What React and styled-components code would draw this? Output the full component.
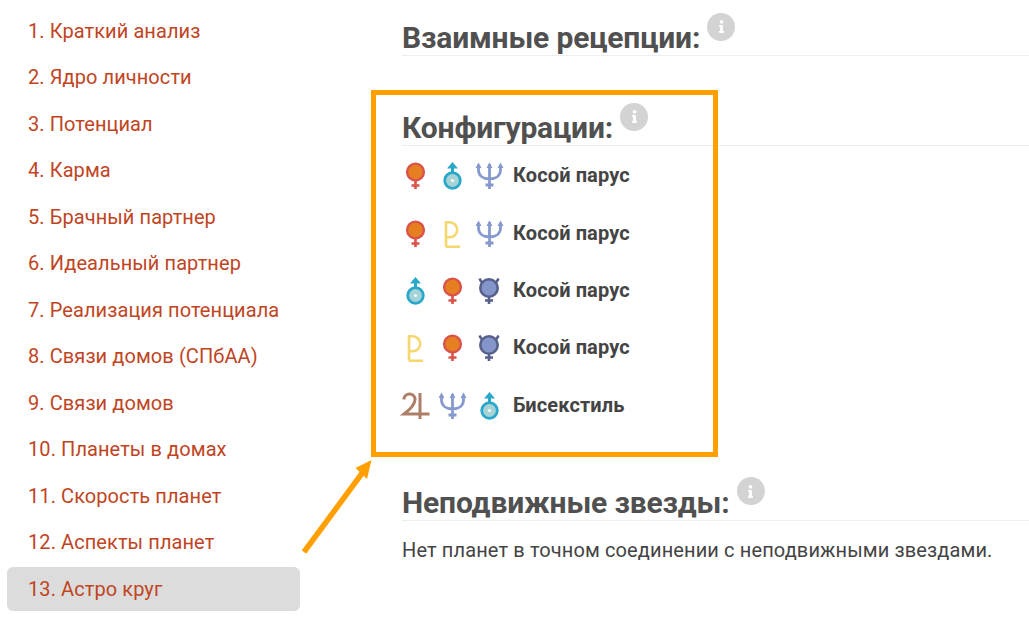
import React from "react";
import styled, { createGlobalStyle } from "styled-components";
import { FaInfo } from "react-icons/fa";

const menu = [
    "1. Краткий анализ",
    "2. Ядро личности",
    "3. Потенциал",
    "4. Карма",
    "5. Брачный партнер",
    "6. Идеальный партнер",
    "7. Реализация потенциала",
    "8. Связи домов (СПбАА)",
    "9. Связи домов",
    "10. Планеты в домах",
    "11. Скорость планет",
    "12. Аспекты планет",
    "13. Астро круг",
];

const Venus = () => (
    <svg width="30" height="30" viewBox="0 0 30 30">
        <path d="M15.500 20v9M11.500 25.500h8" stroke="#d9534a" strokeWidth="2.600" fill="none" />
        <circle cx="15.500" cy="12" r="8.400" fill="#e67e22" stroke="#d9534a" strokeWidth="2.400" />
    </svg>
);
const Uranus = () => (
    <svg width="30" height="30" viewBox="0 0 30 30">
        <path d="M15.500 13V4" stroke="#2aa7c9" strokeWidth="3" fill="none" />
        <path d="M15.500 2L21 8.500H10Z" fill="#2aa7c9" />
        <circle cx="15.500" cy="20.500" r="7.800" fill="#a5d3d6" stroke="#2aa7c9" strokeWidth="2.800" />
        <circle cx="15.500" cy="20.500" r="1.600" fill="#f4fbfb" />
    </svg>
);
const Neptune = () => (
    <svg width="30" height="30" viewBox="0 0 30 30">
        <path
            d="M15.500 4v25M11.500 25h8M4.500 5v5c0 6 5 9 11 9s11-3 11-9V5"
            stroke="#8699cf"
            strokeWidth="2.800"
            fill="none"
        />
        <path d="M1.500 8L4.500 2.500 7.500 8ZM12.500 8L15.500 2.500 18.500 8ZM23.500 8L26.500 2.500 29.500 8Z" fill="#8699cf" />
    </svg>
);
const Pluto = () => (
    <svg width="30" height="30" viewBox="0 0 30 30">
        <path
            d="M9 28.700V4.300h3.700a7.500 7.500 0 0 1 0 15H9M9 28.700H23"
            stroke="#f5d76e"
            strokeWidth="2.600"
            fill="none"
        />
    </svg>
);
const Mercury = () => (
    <svg width="30" height="30" viewBox="0 0 30 30">
        <path d="M15 20v9M11 25.500h8" stroke="#56608a" strokeWidth="2.600" fill="none" />
        <path d="M5.500 3.500c1 3 3 4.500 5 5M24.500 3.500c-1 3-3 4.500-5 5" stroke="#56608a" strokeWidth="2.400" fill="none" />
        <circle cx="15" cy="13" r="8.700" fill="#8496c9" stroke="#56608a" strokeWidth="2.600" />
    </svg>
);
const Jupiter = () => (
    <svg width="30" height="30" viewBox="0 0 30 30">
        <path
            d="M4 9.500c0-7 11-7.500 11 0 0 5-5 10-11 14.500H29.500M20 3v26"
            stroke="#ae7f68"
            strokeWidth="3"
            fill="none"
        />
    </svg>
);

const rows = [
    { icons: [Venus, Uranus, Neptune], label: "Косой парус" },
    { icons: [Venus, Pluto, Neptune], label: "Косой парус" },
    { icons: [Uranus, Venus, Mercury], label: "Косой парус" },
    { icons: [Pluto, Venus, Mercury], label: "Косой парус" },
    { icons: [Jupiter, Neptune, Uranus], label: "Бисекстиль" },
];

const App = () => {
    return (
        <Page>
            <GlobalStyle />
            <Sidebar>
                {menu.map((item, i) => (
                    <MenuItem key={item} $active={i === menu.length - 1}>
                        {item}
                    </MenuItem>
                ))}
            </Sidebar>
            <Main>
                <Section>
                    <Heading>
                        Взаимные рецепции:
                        <Info>
                            <FaInfo />
                        </Info>
                    </Heading>
                </Section>
                <ConfigSection>
                    <Heading>
                        Конфигурации:
                        <Info>
                            <FaInfo />
                        </Info>
                    </Heading>
                    <Rows>
                        {rows.map((row, i) => (
                            <Row key={i}>
                                {row.icons.map((Icon, j) => (
                                    <Slot key={j}>
                                        <Icon />
                                    </Slot>
                                ))}
                                <Label>{row.label}</Label>
                            </Row>
                        ))}
                    </Rows>
                    <Highlight />
                </ConfigSection>
                <StarsSection>
                    <Heading>
                        Неподвижные звезды:
                        <Info>
                            <FaInfo />
                        </Info>
                    </Heading>
                    <Note>Нет планет в точном соединении с неподвижными звездами.</Note>
                </StarsSection>
            </Main>
            <Arrow width="90" height="110" viewBox="0 0 90 110">
                <path d="M5 101L64 21" stroke="#ff9f00" strokeWidth="5.500" fill="none" />
                <path d="M72.500 9L56.500 17L68 28Z" fill="#ff9f00" />
            </Arrow>
        </Page>
    );
};

const GlobalStyle = createGlobalStyle`
    html, body {
        margin: 0;
        padding: 0;
        background: #fff;
    }
    body {
        font-family: Roboto, "Liberation Sans", sans-serif;
        overflow: hidden;
    }
`;

const Page = styled.div`
    position: relative;
    display: flex;
    width: 1029px;
    height: 625px;
    overflow: hidden;
`;

const Sidebar = styled.nav`
    width: 293px;
    margin-left: 7px;
    padding-top: 8.8px;
    display: flex;
    flex-direction: column;
    gap: 2.5px;
`;

const MenuItem = styled.a`
    height: 44px;
    line-height: 44px;
    padding-left: 21px;
    border-radius: 6px;
    font-size: 20px;
    letter-spacing: 0.08px;
    color: #c0451f;
    background: ${(props) => (props.$active ? "#dcdcdc" : "transparent")};
`;

const Main = styled.main`
    flex: 1;
    margin-left: 102px;
    min-width: 0;
`;

const Section = styled.section`
    padding-top: 12px;
`;

const ConfigSection = styled.section`
    position: relative;
    padding-top: 46px;
`;

const StarsSection = styled.section`
    padding-top: 57px;
`;

const Heading = styled.h2`
    margin: 0;
    height: 43px;
    line-height: 51px;
    font-size: 30px;
    letter-spacing: -0.16px;
    font-weight: 700;
    color: #505050;
    border-bottom: 1px solid #eeeeee;
    white-space: nowrap;
`;

const Info = styled.span`
    display: inline-flex;
    align-items: center;
    justify-content: center;
    width: 28px;
    height: 28px;
    margin-left: 7px;
    border-radius: 50%;
    background: #d3d3d3;
    color: #fff;
    font-size: 13px;
    vertical-align: 15px;
`;

const Rows = styled.div`
    margin-left: -2px;
    padding-top: 14.4px;
    display: flex;
    flex-direction: column;
    gap: 27.3px;
`;

const Row = styled.div`
    display: flex;
    align-items: center;
    height: 30px;
`;

const Slot = styled.span`
    display: flex;
    width: 30px;
    height: 30px;
    margin-right: 7px;
    svg {
        display: block;
    }
`;

const Label = styled.span`
    margin-left: 2px;
    font-size: 20px;
    font-weight: 700;
    letter-spacing: 0.12px;
    color: #444444;
`;

const Note = styled.p`
    margin: 18px 0 0;
    font-size: 20px;
    line-height: 23px;
    letter-spacing: 0.12px;
    color: #444444;
`;

const Highlight = styled.div`
    position: absolute;
    left: -31px;
    top: 34px;
    width: 347px;
    height: 367px;
    box-sizing: border-box;
    border: 5px solid #ff9f00;
    pointer-events: none;
`;

const Arrow = styled.svg`
    position: absolute;
    left: 299px;
    top: 451px;
`;

export default App;
